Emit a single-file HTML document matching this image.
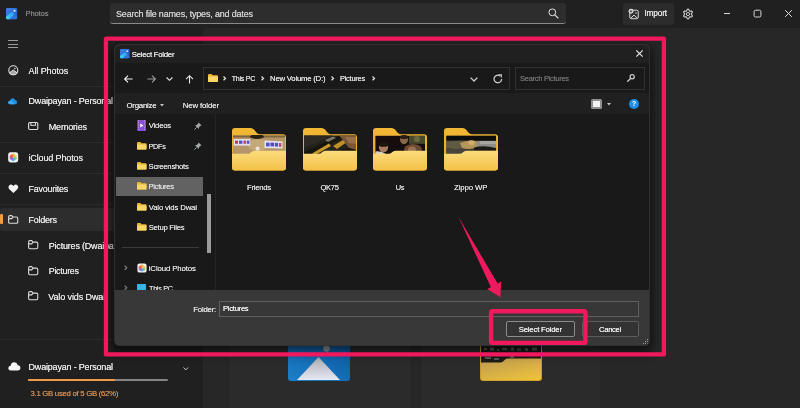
<!DOCTYPE html>
<html><head><meta charset="utf-8"><title>Photos</title>
<style>
*{box-sizing:border-box;margin:0;padding:0}
html,body{width:800px;height:408px;overflow:hidden;background:#202020}
body{font-family:"Liberation Sans",sans-serif;color:#e4e4e4;position:relative;font-size:9px}
.abs{position:absolute}
.t{position:absolute;white-space:nowrap;line-height:12px;height:12px;text-shadow:0 0 0.5px currentColor}
#w{position:absolute;left:0;top:0;width:800px;height:408px;will-change:transform}
#content{left:203px;top:28px;width:597px;height:380px;background:#272727;border-top-left-radius:4px}
.sep{position:absolute;left:0;width:203px;height:1px;background:#2c2c2c}
.nav{font-size:9.3px;color:#e6e6e6}
svg{position:absolute;overflow:visible}
</style></head><body>
<div id="w">
<!-- app chrome -->
<div class="abs" id="content"></div>
<div class="abs" style="left:230px;top:340px;width:180px;height:68px;background:#2b2b2b"></div>
<div class="abs" style="left:422px;top:340px;width:178px;height:68px;background:#2b2b2b"></div>

<!-- title bar -->
<svg style="left:5.8px;top:7.9px" width="11.2" height="11.2" viewBox="0 0 12 12"><defs><linearGradient id="ag" x1="0" y1="0" x2="1" y2="1"><stop offset="0" stop-color="#3f82e4"/><stop offset="1" stop-color="#2458c2"/></linearGradient>
 <linearGradient id="ag2" x1="0" y1="1" x2="1" y2="0"><stop offset="0" stop-color="#46d8fa"/><stop offset="1" stop-color="#2a9cec"/></linearGradient><clipPath id="ac"><rect x="0" y="0" width="12" height="12" rx="1.6"/></clipPath></defs>
 <rect x="0" y="0" width="12" height="12" rx="1.6" fill="url(#ag)"/>
 <g clip-path="url(#ac)"><path d="M-1 11.5 L5.6 4.9 Q6.4 4.1 7.2 4.9 L13 10.8 V13 H-1Z" fill="#2f74dc"/><path d="M-0.5 9.6 L5.7 4.6 Q6.4 4 7.1 4.6 L9 6.5 L2.6 13 H-0.5Z" fill="url(#ag2)"/></g>
 <rect x="8.1" y="1.9" width="2.1" height="2.1" rx="0.3" fill="#d6e6ff"/></svg>
<div class="t" style="left:25.50px;top:8px;font-size:7.7px;letter-spacing:-0.188px;color:#808080">Photos</div>
<div class="abs" style="left:110px;top:3px;width:456px;height:21px;background:#2d2d2d;border-radius:3px;border-bottom:1px solid #8a8a8a"></div>
<div class="t" style="left:116.00px;top:8px;font-size:9px;letter-spacing:-0.179px;color:#d0d0d0">Search file names, types, and dates</div>
<svg style="left:548px;top:8px" width="11" height="11" viewBox="0 0 11 11"><circle cx="4.3" cy="4.3" r="3.4" fill="none" stroke="#e0e0e0" stroke-width="1"/><path d="M6.8 6.8 L10 10" stroke="#e0e0e0" stroke-width="1.1" stroke-linecap="round"/></svg>
<div class="abs" style="left:622.5px;top:2.5px;width:51px;height:22px;background:#2c2c2c;border-radius:3px"></div>
<svg style="left:628.3px;top:7.8px" width="11.5" height="11.5" viewBox="0 0 13 13"><rect x="2" y="2.5" width="9.6" height="9.6" rx="1.8" fill="none" stroke="#e0e0e0" stroke-width="1.1"/><path d="M3 11.6 L6.8 8 L10.6 11.6" fill="none" stroke="#e0e0e0" stroke-width="1.1"/><circle cx="9" cy="5.6" r="0.85" fill="#e0e0e0"/><circle cx="3.4" cy="3.7" r="2.8" fill="#e0e0e0"/><path d="M3.4 2.2 V5.2 M1.9 3.7 H4.9" stroke="#2c2c2c" stroke-width="0.8"/></svg>
<div class="t" style="left:644.50px;top:7px;font-size:8.3px;letter-spacing:-0.203px;color:#e6e6e6">Import</div>
<svg style="left:681.8px;top:7.6px" width="12" height="12" viewBox="0 0 12 12"><path d="M6.00 1.10 L6.42 1.23 L6.78 1.57 L7.06 2.04 L7.27 2.52 L7.44 2.91 L7.65 3.14 L7.95 3.21 L8.38 3.17 L8.90 3.10 L9.45 3.11 L9.93 3.25 L10.24 3.55 L10.34 3.97 L10.23 4.46 L9.96 4.94 L9.64 5.36 L9.39 5.70 L9.30 6.00 L9.39 6.30 L9.64 6.64 L9.96 7.06 L10.23 7.54 L10.34 8.03 L10.24 8.45 L9.93 8.75 L9.45 8.89 L8.90 8.90 L8.38 8.83 L7.95 8.79 L7.65 8.86 L7.44 9.09 L7.27 9.48 L7.06 9.96 L6.78 10.43 L6.42 10.77 L6.00 10.90 L5.58 10.77 L5.22 10.43 L4.94 9.96 L4.73 9.48 L4.56 9.09 L4.35 8.86 L4.05 8.79 L3.62 8.83 L3.10 8.90 L2.55 8.89 L2.07 8.75 L1.76 8.45 L1.66 8.03 L1.77 7.54 L2.04 7.06 L2.36 6.64 L2.61 6.30 L2.70 6.00 L2.61 5.70 L2.36 5.36 L2.04 4.94 L1.77 4.46 L1.66 3.97 L1.76 3.55 L2.07 3.25 L2.55 3.11 L3.10 3.10 L3.62 3.17 L4.05 3.21 L4.35 3.14 L4.56 2.91 L4.73 2.52 L4.94 2.04 L5.22 1.57 L5.58 1.23Z" fill="none" stroke="#d6d6d6" stroke-width="1.05" stroke-linejoin="round"/><circle cx="6" cy="6" r="1.6" fill="none" stroke="#d6d6d6" stroke-width="0.95"/></svg>
<div class="abs" style="left:723.7px;top:13px;width:6.4px;height:1px;background:#d8d8d8"></div>
<svg style="left:753px;top:9px" width="9" height="9" viewBox="0 0 9 9"><rect x="1.1" y="1.2" width="6.8" height="6.8" rx="1.3" fill="none" stroke="#d8d8d8" stroke-width="1"/></svg>
<svg style="left:784.5px;top:10px" width="7" height="7" viewBox="0 0 7 7"><path d="M0.2 0.2 L6.8 6.8 M6.8 0.2 L0.2 6.8" stroke="#dcdcdc" stroke-width="1"/></svg>

<!-- sidebar -->
<div class="abs" style="left:8px;top:39.9px;width:9.5px;height:1.3px;background:#9c9c9c"></div>
<div class="abs" style="left:8px;top:43.5px;width:9.5px;height:1.3px;background:#9c9c9c"></div>
<div class="abs" style="left:8px;top:47.1px;width:9.5px;height:1.3px;background:#9c9c9c"></div>

<svg style="left:7.6px;top:64.8px" width="10.6" height="10.6" viewBox="0 0 12 12" preserveAspectRatio="none"><circle cx="6" cy="6" r="5.1" fill="none" stroke="#dedede" stroke-width="1.3"/><path d="M1.6 8.8 L6 5.6 L10.4 8.8 Q8.6 11.1 6 11.1 Q3.4 11.1 1.6 8.8Z" fill="#a8a8a8" stroke="#dedede" stroke-width="1.1" stroke-linejoin="round"/><circle cx="7.9" cy="3.9" r="0.9" fill="#dedede"/></svg>
<div class="t" style="left:28.50px;top:65px;font-size:9px;letter-spacing:-0.087px;color:#e6e6e6">All Photos</div>
<div class="sep" style="top:86px"></div>
<svg style="left:8.1px;top:97.8px" width="9.4" height="6.5" viewBox="0 0 13.3 10" preserveAspectRatio="none"><path d="M2.9 9.6 Q0.3 9.6 0.3 7 Q0.3 4.6 2.7 4.3 Q3.4 0.4 6.6 0.4 Q9.4 0.4 10.3 3.6 Q13 3.7 13 6.6 Q13 9.6 10.2 9.6Z" fill="#1f8fe6"/><path d="M2.9 9.6 Q0.3 9.6 0.3 7 Q0.3 4.6 2.7 4.3 Q5.5 4.2 7 6 Q8.5 8.4 10.2 9.6Z" fill="#3aa8f2"/></svg>
<div class="t" style="left:28.50px;top:95px;font-size:9px;letter-spacing:-0.187px;color:#e6e6e6">Dwaipayan - Personal</div>
<svg style="left:27.8px;top:122.4px" width="10.4" height="8.1" viewBox="0 0 12 10" preserveAspectRatio="none"><rect x="0.7" y="0.7" width="10.6" height="8.6" rx="1.3" fill="none" stroke="#dcdcdc" stroke-width="1.3"/><rect x="3.3" y="0.7" width="5.4" height="3.4" fill="none" stroke="#dcdcdc" stroke-width="1.2"/></svg>
<div class="t" style="left:48.75px;top:121px;font-size:9px;letter-spacing:-0.181px;color:#e6e6e6">Memories</div>
<div class="sep" style="top:142px"></div>
<svg style="left:7.7px;top:152.2px" width="10.4" height="10.6" viewBox="0 0 12 12" preserveAspectRatio="none"><rect x="0.2" y="0.2" width="11.6" height="11.6" rx="2.8" fill="#f2f2f2"/><circle cx="6" cy="3.7" r="2" fill="#f6a623" opacity=".9"/><circle cx="8.1" cy="4.9" r="2" fill="#f4d03f" opacity=".85"/><circle cx="8.1" cy="7.2" r="2" fill="#7ac74f" opacity=".85"/><circle cx="6" cy="8.4" r="2" fill="#3fa9f5" opacity=".85"/><circle cx="3.9" cy="7.2" r="2" fill="#9b59d0" opacity=".85"/><circle cx="3.9" cy="4.9" r="2" fill="#ef5350" opacity=".85"/></svg>
<div class="t" style="left:28.50px;top:152px;font-size:9px;letter-spacing:-0.129px;color:#e6e6e6">iCloud Photos</div>
<div class="sep" style="top:173px"></div>
<svg style="left:7.7px;top:184px" width="10.7" height="9.2" viewBox="0 0 12 10.4" preserveAspectRatio="none"><path d="M6 10.2 L1.2 5.6 Q-0.4 3.6 1.2 1.6 Q3.2 -0.2 5.2 1.5 L6 2.3 L6.8 1.5 Q8.8 -0.2 10.8 1.6 Q12.4 3.6 10.8 5.6Z" fill="#f4f4f4"/></svg>
<div class="t" style="left:28.50px;top:183px;font-size:9px;letter-spacing:-0.253px;color:#e6e6e6">Favourites</div>
<div class="sep" style="top:204px"></div>
<div class="abs" style="left:0;top:207.5px;width:203px;height:23px;background:#2d2d2d;border-radius:3px"></div>
<div class="abs" style="left:0;top:214.2px;width:2.6px;height:9.8px;background:#f29c46;border-radius:1px"></div>
<svg style="left:7.7px;top:215px" width="10.4" height="8.9" viewBox="0 0 12 10" preserveAspectRatio="none"><path d="M0.7 2.2 Q0.7 0.7 2.2 0.7 H4.3 L5.9 2.3 H9.8 Q11.3 2.3 11.3 3.8 V7.8 Q11.3 9.3 9.8 9.3 H2.2 Q0.7 9.3 0.7 7.8Z M0.7 4.1 H4.3 L5.9 2.3" fill="none" stroke="#dcdcdc" stroke-width="1.25" stroke-linejoin="round"/></svg>
<div class="t" style="left:28.50px;top:214px;font-size:9px;letter-spacing:-0.253px;color:#e6e6e6">Folders</div>
<svg style="left:27.7px;top:240.2px" width="10.4" height="9.4" viewBox="0 0 12 10" preserveAspectRatio="none"><path d="M0.7 2.2 Q0.7 0.7 2.2 0.7 H4.3 L5.9 2.3 H9.8 Q11.3 2.3 11.3 3.8 V7.8 Q11.3 9.3 9.8 9.3 H2.2 Q0.7 9.3 0.7 7.8Z M0.7 4.1 H4.3 L5.9 2.3" fill="none" stroke="#dcdcdc" stroke-width="1.25" stroke-linejoin="round"/></svg>
<div class="t" style="left:48.75px;top:240px;font-size:9px;letter-spacing:-0.194px;color:#e6e6e6">Pictures (Dwaipayan)</div>
<svg style="left:27.7px;top:265.5px" width="10.4" height="9.4" viewBox="0 0 12 10" preserveAspectRatio="none"><path d="M0.7 2.2 Q0.7 0.7 2.2 0.7 H4.3 L5.9 2.3 H9.8 Q11.3 2.3 11.3 3.8 V7.8 Q11.3 9.3 9.8 9.3 H2.2 Q0.7 9.3 0.7 7.8Z M0.7 4.1 H4.3 L5.9 2.3" fill="none" stroke="#dcdcdc" stroke-width="1.25" stroke-linejoin="round"/></svg>
<div class="t" style="left:48.75px;top:265px;font-size:8.92px;letter-spacing:-0.280px;color:#e6e6e6">Pictures</div>
<svg style="left:27.7px;top:290.9px" width="10.4" height="9.4" viewBox="0 0 12 10" preserveAspectRatio="none"><path d="M0.7 2.2 Q0.7 0.7 2.2 0.7 H4.3 L5.9 2.3 H9.8 Q11.3 2.3 11.3 3.8 V7.8 Q11.3 9.3 9.8 9.3 H2.2 Q0.7 9.3 0.7 7.8Z M0.7 4.1 H4.3 L5.9 2.3" fill="none" stroke="#dcdcdc" stroke-width="1.25" stroke-linejoin="round"/></svg>
<div class="t" style="left:48.20px;top:291px;font-size:9px;letter-spacing:-0.105px;color:#e6e6e6">Valo vids Dwai</div>
<div class="sep" style="top:339px"></div>
<svg style="left:7.6px;top:362.3px" width="12.7" height="8.8" viewBox="0 0 13.3 10" preserveAspectRatio="none"><path d="M2.9 9.6 Q0.3 9.6 0.3 7 Q0.3 4.6 2.7 4.3 Q3.4 0.4 6.6 0.4 Q9.4 0.4 10.3 3.6 Q13 3.7 13 6.6 Q13 9.6 10.2 9.6Z" fill="#f6f6f6"/></svg>
<div class="t" style="left:28.50px;top:361px;font-size:9px;letter-spacing:-0.187px;color:#e6e6e6">Dwaipayan - Personal</div>
<svg style="left:183.4px;top:366.6px" width="6" height="4" viewBox="0 0 6 4"><path d="M0.5 0.5 L2.8 2.9 L5.1 0.5" fill="none" stroke="#c8c8c8" stroke-width="1"/></svg>
<div class="abs" style="left:28px;top:378.7px;width:140px;height:2.7px;background:#858585;border-radius:1.3px"></div>
<div class="abs" style="left:28px;top:378.7px;width:87px;height:2.7px;background:#ee9a4c;border-radius:1.3px"></div>
<div class="t" style="left:30.50px;top:388px;font-size:7.78px;letter-spacing:-0.280px;color:#cc8a50">3.1 GB used of 5 GB (62%)</div>

<!-- DIALOG START -->
<!-- background items peeking under pink frame -->
<svg style="left:288px;top:345px" width="62" height="36" viewBox="0 0 62 36">
 <defs><linearGradient id="bg1" x1="0" y1="1" x2="1" y2="0"><stop offset="0" stop-color="#1c80c8"/><stop offset="1" stop-color="#0c58a0"/></linearGradient>
 <linearGradient id="bg2" x1="0" y1="0" x2="0" y2="1"><stop offset="0" stop-color="#a9a9b0"/><stop offset="1" stop-color="#e6e8f4"/></linearGradient></defs>
 <path d="M0 0 H62 V33 Q62 36 59 36 H3 Q0 36 0 33Z" fill="url(#bg1)"/>
 <path d="M9 35 L30.5 12 L52 35Z" fill="url(#bg2)"/>
 <circle cx="38.5" cy="3.5" r="3.2" fill="#9a9ea4"/>
</svg>
<svg style="left:480px;top:345px" width="62" height="36" viewBox="0 0 62 36">
 <defs><linearGradient id="bg3" x1="0.2" y1="0" x2="0.8" y2="1"><stop offset="0" stop-color="#c09c50"/><stop offset="1" stop-color="#ecc23a"/></linearGradient></defs>
 <path d="M0 0 H62 V33 Q62 36 59 36 H3 Q0 36 0 33Z" fill="#c99a28"/>
 <rect x="1" y="0" width="60" height="18" fill="#1c1b17"/>
 <path d="M4 3 h3 v2 h-3z M10 2.5 h4 v3 h-4z M17 4 h2 v2 h-2z M22 3 h5 v2 h-5z M31 2.5 h3 v3 h-3z M37 3.5 h4 v2 h-4z M45 3 h3 v3 h-3z M52 2.5 h5 v3 h-5z M5 12 h6 v2 h-6z M14 13 h5 v2 h-5z M30 11 h4 v2 h-4z" fill="#5c6a5e" opacity=".8"/>
 <path d="M1 17.6 H20 Q22 17.6 23.4 16.2 L24.6 15 Q26 13.6 28 13.6 H61 V32.5 Q61 35.2 58 35.2 H4 Q1 35.2 1 32.5Z" fill="url(#bg3)"/>
</svg>


<!-- dialog -->
<div class="abs" id="dlg" style="left:114px;top:44px;width:536px;height:302px;background:#202020;border-radius:6px;box-shadow:0 0 0 1px #363636 inset,0 4px 10px 3px rgba(0,0,0,.55);overflow:hidden">
 <!-- title -->
 <svg style="left:5.6px;top:4.7px" width="9.5" height="9.2" viewBox="0 0 12 12" preserveAspectRatio="none"><defs><linearGradient id="dg" x1="0" y1="0" x2="1" y2="1"><stop offset="0" stop-color="#3f82e4"/><stop offset="1" stop-color="#2458c2"/></linearGradient>
 <linearGradient id="dg2" x1="0" y1="1" x2="1" y2="0"><stop offset="0" stop-color="#46d8fa"/><stop offset="1" stop-color="#2a9cec"/></linearGradient><clipPath id="dc"><rect x="0" y="0" width="12" height="12" rx="1.6"/></clipPath></defs>
 <rect x="0" y="0" width="12" height="12" rx="1.6" fill="url(#dg)"/>
 <g clip-path="url(#dc)"><path d="M-1 11.5 L5.6 4.9 Q6.4 4.1 7.2 4.9 L13 10.8 V13 H-1Z" fill="#2f74dc"/><path d="M-0.5 9.6 L5.7 4.6 Q6.4 4 7.1 4.6 L9 6.5 L2.6 13 H-0.5Z" fill="url(#dg2)"/></g>
 <rect x="8.1" y="1.9" width="2.1" height="2.1" rx="0.3" fill="#d6e6ff"/></svg>
 <div class="t" style="left:17.75px;top:5px;font-size:7.8px;letter-spacing:-0.266px;color:#e8e8e8">Select Folder</div>
 <svg style="left:521.5px;top:6.3px" width="7" height="7" viewBox="0 0 7 7"><path d="M0.3 0.3 L6.7 6.7 M6.7 0.3 L0.3 6.7" stroke="#e4e4e4" stroke-width="1.2"/></svg>
 <!-- nav row -->
 <div class="abs" style="left:0;top:19px;width:536px;height:30px;background:#191919"></div>
 <svg style="left:10px;top:31px" width="9" height="8" viewBox="0 0 9 8"><path d="M8.6 4 H0.8 M4 0.6 L0.6 4 L4 7.4" fill="none" stroke="#f0f0f0" stroke-width="1.1"/></svg>
 <svg style="left:33px;top:31px" width="9" height="8" viewBox="0 0 9 8"><path d="M0.4 4 H8.2 M5 0.6 L8.4 4 L5 7.4" fill="none" stroke="#9c9c9c" stroke-width="1.1"/></svg>
 <svg style="left:52px;top:33px" width="7" height="4" viewBox="0 0 7 4"><path d="M0.6 0.5 L3.5 3.3 L6.4 0.5" fill="none" stroke="#e8e8e8" stroke-width="1.1"/></svg>
 <svg style="left:71px;top:31px" width="9" height="9" viewBox="0 0 9 9"><path d="M4.5 8.6 V0.8 M1 4.2 L4.5 0.7 L8 4.2" fill="none" stroke="#e8e8e8" stroke-width="1.1"/></svg>
 <div class="abs" style="left:89px;top:23px;width:307px;height:23px;border:1px solid #313131;background:#191919"></div>
 <svg style="left:94px;top:30px" width="10" height="8" viewBox="0 0 10 8"><path d="M0 1 Q0 0 1 0 H3.6 L4.8 1.2 H9 Q10 1.2 10 2.2 V7 Q10 8 9 8 H1 Q0 8 0 7Z" fill="#e8b735"/><path d="M0 2.6 H10 V7 Q10 8 9 8 H1 Q0 8 0 7Z" fill="#f7d768"/></svg>
 <svg style="left:108.7px;top:32.3px" width="3" height="5" viewBox="0 0 3 5"><path d="M0.5 0.5 L2.5 2.4 L0.5 4.3" fill="none" stroke="#e0e0e0" stroke-width="1.3"/></svg><div class="t" style="left:117.75px;top:29px;font-size:7.08px;letter-spacing:-0.280px;color:#e0e0e0">This PC</div><svg style="left:147.45px;top:32.3px" width="3" height="5" viewBox="0 0 3 5"><path d="M0.5 0.5 L2.5 2.4 L0.5 4.3" fill="none" stroke="#e0e0e0" stroke-width="1.3"/></svg><div class="t" style="left:156.00px;top:29px;font-size:7.8px;letter-spacing:-0.246px;color:#e0e0e0">New Volume (D:)</div><svg style="left:217.45px;top:32.3px" width="3" height="5" viewBox="0 0 3 5"><path d="M0.5 0.5 L2.5 2.4 L0.5 4.3" fill="none" stroke="#e0e0e0" stroke-width="1.3"/></svg><div class="t" style="left:226.00px;top:29px;font-size:7.53px;letter-spacing:-0.280px;color:#e0e0e0">Pictures</div><svg style="left:257.7px;top:32.3px" width="3" height="5" viewBox="0 0 3 5"><path d="M0.5 0.5 L2.5 2.4 L0.5 4.3" fill="none" stroke="#e0e0e0" stroke-width="1.3"/></svg>
 <svg style="left:356.4px;top:32.6px" width="8" height="5" viewBox="0 0 8 5"><path d="M0.6 0.6 L4 4 L7.4 0.6" fill="none" stroke="#cdcdcd" stroke-width="1.3"/></svg>
 <svg style="left:379px;top:30.2px" width="9.6" height="9.6" viewBox="0 0 9.6 9.6"><path d="M8.6 4.9 A3.8 3.8 0 1 1 7 1.9" fill="none" stroke="#d0d0d0" stroke-width="1.25"/><path d="M5.6 0.9 L8.3 0.9 L8.3 3.6" fill="none" stroke="#d0d0d0" stroke-width="1.2"/></svg>
 <div class="abs" style="left:401px;top:23px;width:130px;height:23px;border:1px solid #313131;background:#191919"></div>
 <div class="t" style="left:406.00px;top:29px;font-size:7.53px;letter-spacing:-0.280px;color:#6e6e6e">Search Pictures</div>
 <svg style="left:513px;top:30px" width="8" height="8" viewBox="0 0 8 8"><circle cx="5.2" cy="2.8" r="2.1" fill="none" stroke="#cacaca" stroke-width="1.25"/><path d="M3.6 4.4 L0.7 7.3" stroke="#cacaca" stroke-width="1.35" stroke-linecap="round"/></svg>
 <!-- toolbar row -->
 <div class="t" style="left:12.50px;top:56px;font-size:7.8px;letter-spacing:-0.234px;color:#e0e0e0">Organize</div>
 <svg style="left:45.5px;top:59.5px" width="4" height="3" viewBox="0 0 4 3"><path d="M0 0 H4 L2 2.4Z" fill="#c8c8c8"/></svg>
 <div class="t" style="left:68.75px;top:56px;font-size:7.8px;letter-spacing:-0.115px;color:#e0e0e0">New folder</div>
 <div class="abs" style="left:477px;top:55px;width:11px;height:10px;background:#8e8e8e;border-radius:1.5px"></div>
 <div class="abs" style="left:479px;top:57px;width:7px;height:6px;background:#f2f2f2"></div>
 <svg style="left:493.4px;top:59px" width="4" height="3" viewBox="0 0 4 3"><path d="M0 0 H4 L2 2.4Z" fill="#c8c8c8"/></svg>
 <div class="abs" style="left:515px;top:55px;width:10px;height:10px;border-radius:50%;background:#1e8fe8;color:#fff;font-size:7.5px;font-weight:bold;text-align:center;line-height:10px">?</div>
 <!-- content -->
 <div class="abs" style="left:0;top:69.6px;width:536px;height:177px;background:#191919"></div>
 <div class="abs" style="left:101px;top:70px;width:1px;height:176px;background:#242424"></div>
 <!-- nav tree -->
 <div class="abs" style="left:2px;top:133px;width:87px;height:19px;background:#626262"></div>
 <svg style="left:22.7px;top:75.8px" width="9.2" height="11" viewBox="0 0 10 11" preserveAspectRatio="none"><rect x="0.3" y="0" width="9.4" height="11" rx="1" fill="#8a4fd8"/><path d="M1.6 0 V11 M8.4 0 V11" stroke="#c9a8f5" stroke-width="0.8" stroke-dasharray="1.2 1"/><path d="M3.6 3.4 L7 5.5 L3.6 7.6Z" fill="#fff"/></svg>
 <div class="t" style="left:34.75px;top:76px;font-size:7.8px;letter-spacing:-0.241px;color:#dcdcdc">Videos</div>
 <svg style="left:80px;top:77.6px" width="8" height="8" viewBox="0 0 8 8"><path d="M4.6 0.4 L7.6 3.4 L6.4 3.8 L5 5.2 L4.8 7 L1 3.2 L2.8 3 L4.2 1.6Z" fill="#a4aaaa"/><path d="M2.6 5.4 L0.4 7.6" stroke="#a4aaaa" stroke-width="1"/></svg>
 <svg style="left:22.6px;top:98.1px" width="9.5" height="7.6" viewBox="0 0 10 8"><path d="M0 1 Q0 0 1 0 H3.6 L4.8 1.2 H9 Q10 1.2 10 2.2 V7 Q10 8 9 8 H1 Q0 8 0 7Z" fill="#e8b735"/><path d="M0 2.6 H10 V7 Q10 8 9 8 H1 Q0 8 0 7Z" fill="#f7d768"/></svg>
 <div class="t" style="left:34.50px;top:97px;font-size:7.24px;letter-spacing:-0.280px;color:#dcdcdc">PDFs</div>
 <svg style="left:80px;top:97.6px" width="8" height="8" viewBox="0 0 8 8"><path d="M4.6 0.4 L7.6 3.4 L6.4 3.8 L5 5.2 L4.8 7 L1 3.2 L2.8 3 L4.2 1.6Z" fill="#a4aaaa"/><path d="M2.6 5.4 L0.4 7.6" stroke="#a4aaaa" stroke-width="1"/></svg>
 <svg style="left:22.6px;top:118.1px" width="9.5" height="7.6" viewBox="0 0 10 8"><path d="M0 1 Q0 0 1 0 H3.6 L4.8 1.2 H9 Q10 1.2 10 2.2 V7 Q10 8 9 8 H1 Q0 8 0 7Z" fill="#e8b735"/><path d="M0 2.6 H10 V7 Q10 8 9 8 H1 Q0 8 0 7Z" fill="#f7d768"/></svg>
 <div class="t" style="left:34.50px;top:117px;font-size:7.75px;letter-spacing:-0.280px;color:#dcdcdc">Screenshots</div>
 <svg style="left:22.6px;top:138.1px" width="9.5" height="7.6" viewBox="0 0 10 8"><path d="M0 1 Q0 0 1 0 H3.6 L4.8 1.2 H9 Q10 1.2 10 2.2 V7 Q10 8 9 8 H1 Q0 8 0 7Z" fill="#e8b735"/><path d="M0 2.6 H10 V7 Q10 8 9 8 H1 Q0 8 0 7Z" fill="#f7d768"/></svg>
 <div class="t" style="left:34.50px;top:137px;font-size:7.63px;letter-spacing:-0.280px;color:#dcdcdc">Pictures</div>
 <svg style="left:22.6px;top:159.1px" width="9.5" height="7.6" viewBox="0 0 10 8"><path d="M0 1 Q0 0 1 0 H3.6 L4.8 1.2 H9 Q10 1.2 10 2.2 V7 Q10 8 9 8 H1 Q0 8 0 7Z" fill="#e8b735"/><path d="M0 2.6 H10 V7 Q10 8 9 8 H1 Q0 8 0 7Z" fill="#f7d768"/></svg>
 <div class="t" style="left:34.75px;top:158px;font-size:7.8px;letter-spacing:-0.178px;color:#dcdcdc">Valo vids Dwai</div>
 <svg style="left:22.6px;top:179.1px" width="9.5" height="7.6" viewBox="0 0 10 8"><path d="M0 1 Q0 0 1 0 H3.6 L4.8 1.2 H9 Q10 1.2 10 2.2 V7 Q10 8 9 8 H1 Q0 8 0 7Z" fill="#e8b735"/><path d="M0 2.6 H10 V7 Q10 8 9 8 H1 Q0 8 0 7Z" fill="#f7d768"/></svg>
 <div class="t" style="left:34.75px;top:178px;font-size:7.71px;letter-spacing:-0.280px;color:#dcdcdc">Setup Files</div>
 <svg style="left:22.5px;top:219px" width="10" height="10" viewBox="0 0 12 12"><rect x="0.5" y="0.5" width="11" height="11" rx="2.6" fill="#f4f4f4"/><circle cx="6" cy="3.6" r="1.9" fill="#f6a623" opacity=".9"/><circle cx="8.2" cy="5" r="1.9" fill="#f4d03f" opacity=".85"/><circle cx="8" cy="7.4" r="1.9" fill="#7ac74f" opacity=".85"/><circle cx="6" cy="8.4" r="1.9" fill="#3fa9f5" opacity=".85"/><circle cx="3.9" cy="7.4" r="1.9" fill="#9b59d0" opacity=".85"/><circle cx="3.8" cy="5" r="1.9" fill="#ef5350" opacity=".85"/></svg>
 <svg style="left:10px;top:221px" width="3.6" height="5.6" viewBox="0 0 4 6"><path d="M0.7 0.6 L3.1 3 L0.7 5.4" fill="none" stroke="#868686" stroke-width="1.25"/></svg>
 <div class="t" style="left:34.75px;top:219px;font-size:7.8px;letter-spacing:-0.108px;color:#dcdcdc">iCloud Photos</div>
 <svg style="left:22.5px;top:239.5px" width="9" height="9" viewBox="0 0 10 9" preserveAspectRatio="none"><rect x="0" y="0" width="10" height="6.6" rx="0.6" fill="#3ab2e6"/><rect x="3" y="7.6" width="4" height="1" fill="#9ad8f6"/></svg>
 <svg style="left:10px;top:241px" width="3.6" height="5.6" viewBox="0 0 4 6"><path d="M0.7 0.6 L3.1 3 L0.7 5.4" fill="none" stroke="#868686" stroke-width="1.25"/></svg>
 <div class="t" style="left:35.00px;top:239px;font-size:7.22px;letter-spacing:-0.280px;color:#dcdcdc">This PC</div>
 <div class="abs" style="left:8px;top:203px;width:77px;height:1px;background:#3a3a3a"></div>
 <div class="abs" style="left:93px;top:150px;width:4px;height:59px;background:#9c9c9c"></div>
 <!-- folders -->
 <svg style="left:0;top:0" width="0" height="0"><defs><filter id="tb" x="-5%" y="-10%" width="110%" height="120%"><feGaussianBlur stdDeviation="0.45"/></filter><linearGradient id="ff" x1="0" y1="0" x2="0" y2="1"><stop offset="0" stop-color="#fbdc7c"/><stop offset="1" stop-color="#f3c148"/></linearGradient><linearGradient id="fb" x1="0" y1="0" x2="0" y2="1"><stop offset="0" stop-color="#f2b834"/><stop offset="1" stop-color="#e5a326"/></linearGradient></defs></svg>
 <svg style="left:118.3px;top:84.1px" width="54" height="43" viewBox="0 0 54 43">
  <clipPath id="tc0"><path d="M0.8 7 H53.2 V27 H0.8Z"/></clipPath>
  <path d="M0 3 Q0 0 3 0 H18.5 Q20.6 0 22 1.6 L24.4 4.6 Q25.8 6.2 28 6.2 H51 Q54 6.2 54 9.2 V39.6 Q54 42.6 51 42.6 H3 Q0 42.6 0 39.6Z" fill="url(#fb)"/>
  <g clip-path="url(#tc0)"><g filter="url(#tb)"><rect x="1" y="7.5" width="52" height="19" fill="#b4966a"/>
  <rect x="1" y="7.5" width="52" height="2" fill="#7d6540"/>
  <ellipse cx="25" cy="8.6" rx="7" ry="2.4" fill="#2a2015"/>
  <ellipse cx="26" cy="17" rx="10" ry="6" fill="#c4a878"/>
  <rect x="1.6" y="11" width="16.6" height="6.6" fill="#e4e0ea"/>
  <rect x="3" y="12.6" width="3" height="3.2" fill="#c0405a"/><rect x="7" y="12.6" width="3.4" height="3.2" fill="#4a58c8"/><rect x="11.4" y="12.6" width="2.6" height="3.2" fill="#c04a6a"/><rect x="14.8" y="12.6" width="2.6" height="3.2" fill="#4a58c8"/>
  <path d="M32.5 12.6 L50.6 13.4 V20.6 L32.5 20Z" fill="#e6e4f0"/>
  <rect x="34" y="14.6" width="3.6" height="3.8" fill="#4a56c8"/><rect x="38.4" y="14.6" width="3.6" height="3.8" fill="#5a4ac0"/><rect x="42.8" y="14.8" width="3.2" height="3.8" fill="#4a56c8"/><rect x="46.8" y="15" width="2.6" height="3.8" fill="#b84a70"/>
  <circle cx="25.6" cy="20.6" r="2.1" fill="#ece6d8"/></g></g>
  <path d="M0 25.8 H15.5 Q17.6 25.8 19 24.3 Q20.4 22.8 22.5 22.8 H54 V39.6 Q54 42.6 51 42.6 H3 Q0 42.6 0 39.6Z" fill="url(#ff)"/>
 </svg>
 <div class="t" style="left:133.00px;top:138px;font-size:7.78px;letter-spacing:-0.280px;color:#dcdcdc">Friends</div>
 <svg style="left:188.8px;top:84.1px" width="54" height="43" viewBox="0 0 54 43">
  <clipPath id="tc1"><path d="M0.8 7 H53.2 V27 H0.8Z"/></clipPath>
  <path d="M0 3 Q0 0 3 0 H18.5 Q20.6 0 22 1.6 L24.4 4.6 Q25.8 6.2 28 6.2 H51 Q54 6.2 54 9.2 V39.6 Q54 42.6 51 42.6 H3 Q0 42.6 0 39.6Z" fill="url(#fb)"/>
  <g clip-path="url(#tc1)"><g filter="url(#tb)"><rect x="1" y="7.5" width="52" height="19" fill="#24211c"/>
  <path d="M1 7.5 H30 L1 20Z" fill="#2e2a22"/>
  <path d="M1 24 L36 8 L42 8 L8 26.5 H1Z" fill="#15140f"/>
  <path d="M9 25.5 L26 15.5 L28 18 L13 26.5Z" fill="#c8982a"/>
  <path d="M22 12 L30 8.5 L33 10 L25 14Z" fill="#7a7568"/>
  <path d="M30 18 L40 12 L44 14 L34 21Z" fill="#c09028"/>
  <path d="M36 7.5 H53 V22 L46 20 L40 12Z" fill="#7a5634"/>
  <path d="M42 9 H53 V16 L46 15Z" fill="#96704a"/>
  <path d="M28 24 L46 20 L53 22 V26.5 H28Z" fill="#15130f"/></g></g>
  <path d="M0 25.8 H15.5 Q17.6 25.8 19 24.3 Q20.4 22.8 22.5 22.8 H54 V39.6 Q54 42.6 51 42.6 H3 Q0 42.6 0 39.6Z" fill="url(#ff)"/>
 </svg>
 <div class="t" style="left:206.50px;top:138px;font-size:7.56px;letter-spacing:-0.280px;color:#dcdcdc">QK75</div>
 <svg style="left:259.2px;top:84.1px" width="54" height="43" viewBox="0 0 54 43">
  <clipPath id="tc2"><path d="M0.8 7 H53.2 V27 H0.8Z"/></clipPath>
  <path d="M0 3 Q0 0 3 0 H18.5 Q20.6 0 22 1.6 L24.4 4.6 Q25.8 6.2 28 6.2 H51 Q54 6.2 54 9.2 V39.6 Q54 42.6 51 42.6 H3 Q0 42.6 0 39.6Z" fill="url(#fb)"/>
  <g clip-path="url(#tc2)"><g filter="url(#tb)"><rect x="1" y="7.5" width="52" height="19" fill="#e9b030"/>
  <rect x="2.4" y="7.8" width="49.6" height="19" fill="#140f0c"/>
  <rect x="36" y="7.8" width="16" height="8" fill="#4c4a2c"/>
  <circle cx="44" cy="11" r="3" fill="#6a6a40"/>
  <ellipse cx="31" cy="11.6" rx="4" ry="4.6" fill="#8c684c"/>
  <ellipse cx="31" cy="9" rx="4.2" ry="2" fill="#2a1a12"/>
  <ellipse cx="40" cy="21.5" rx="9" ry="5.6" fill="#6c4a30"/>
  <ellipse cx="39" cy="22" rx="4" ry="3.4" fill="#9a7252"/>
  <ellipse cx="10.5" cy="19.5" rx="4.6" ry="4.8" fill="#a67c62"/>
  <ellipse cx="10.5" cy="16.4" rx="5" ry="2.4" fill="#1c1410"/>
  <path d="M2.4 23.5 Q8 22.5 14 26.8 H2.4Z" fill="#d8cec4"/></g></g>
  <path d="M0 25.8 H15.5 Q17.6 25.8 19 24.3 Q20.4 22.8 22.5 22.8 H54 V39.6 Q54 42.6 51 42.6 H3 Q0 42.6 0 39.6Z" fill="url(#ff)"/>
 </svg>
 <div class="t" style="left:281.75px;top:138px;font-size:7.39px;letter-spacing:-0.280px;color:#dcdcdc">Us</div>
 <svg style="left:330.1px;top:84.1px" width="54" height="43" viewBox="0 0 54 43">
  <clipPath id="tc3"><path d="M0.8 7 H53.2 V27 H0.8Z"/></clipPath>
  <path d="M0 3 Q0 0 3 0 H18.5 Q20.6 0 22 1.6 L24.4 4.6 Q25.8 6.2 28 6.2 H51 Q54 6.2 54 9.2 V39.6 Q54 42.6 51 42.6 H3 Q0 42.6 0 39.6Z" fill="url(#fb)"/>
  <g clip-path="url(#tc3)"><g filter="url(#tb)"><rect x="1" y="7.5" width="52" height="19" fill="#e9b030"/>
  <rect x="2.4" y="7.8" width="49.6" height="19" fill="#3c3a2c"/>
  <rect x="2.4" y="7.8" width="49.6" height="4.6" fill="#0b0b0a"/>
  <path d="M2.4 13.4 Q14 12.4 26 13 L22 20 Q10 22 2.4 20Z" fill="#5e5a42"/>
  <path d="M2.4 20 Q12 22 22 20 L24 26.8 H2.4Z" fill="#46443a"/>
  <path d="M16 15 Q24 11.5 34 13.5 L33 19.5 Q26 22 18 20Z" fill="#b69558"/>
  <path d="M24 13 Q28 11.5 31 13.5 L29 17 L25 16.5Z" fill="#d0b070"/>
  <path d="M33 13 H52 V21 H32Z" fill="#8e8e8a"/>
  <path d="M36 13 H52 V16 H36Z" fill="#a8a8a2"/>
  <path d="M30 19.5 Q40 17 52 20 V22.5 H30Z" fill="#1e1e18"/></g></g>
  <path d="M0 25.8 H15.5 Q17.6 25.8 19 24.3 Q20.4 22.8 22.5 22.8 H54 V39.6 Q54 42.6 51 42.6 H3 Q0 42.6 0 39.6Z" fill="url(#ff)"/>
 </svg>
 <div class="t" style="left:340.00px;top:138px;font-size:7.8px;letter-spacing:-0.105px;color:#dcdcdc">Zippo WP</div>
 <!-- bottom -->
 <div class="abs" style="left:0;top:246px;width:536px;height:56px;background:#383838"></div>
 <div class="t" style="left:79.25px;top:260px;font-size:7.8px;letter-spacing:-0.214px;color:#e0e0e0">Folder:</div>
 <div class="abs" style="left:105px;top:257px;width:420px;height:16px;border:1px solid #606060;background:#373737"></div>
 <div class="t" style="left:109.00px;top:259px;font-size:7.67px;letter-spacing:-0.280px;color:#f0f0f0">Pictures</div>
 <div class="abs" style="left:392px;top:277px;width:69px;height:16px;border:1px solid #8c8c8c;border-radius:2px;background:#333"></div><div class="t" style="left:404.75px;top:280px;font-size:7.8px;letter-spacing:-0.224px;color:#f0f0f0">Select Folder</div>
 <div class="abs" style="left:468px;top:277px;width:57px;height:16px;border:1px solid #5c5c5c;border-radius:2px;background:#333"></div><div class="t" style="left:485.00px;top:280px;font-size:7.6px;letter-spacing:-0.280px;color:#f0f0f0">Cancel</div>
 <svg style="left:529px;top:295px" width="5" height="5" viewBox="0 0 5 5"><path d="M4 0H5V1H4ZM2 2H3V3H2ZM4 2H5V3H4ZM0 4H1V5H0ZM2 4H3V5H2ZM4 4H5V5H4Z" fill="#9a9a9a"/></svg>
 <div class="abs" style="left:0;top:0;width:536px;height:302px;border:1px solid #303030;border-radius:6px"></div>
</div>

<!-- pink frame -->
<svg style="left:0;top:0" width="800" height="408" viewBox="0 0 800 408"><rect x="105.95" y="38.6" width="557.95" height="315.8" rx="0.4" fill="none" stroke="#f0195e" stroke-width="4.3"/></svg>
<!-- annotations -->
<svg style="left:0;top:0" width="800" height="408" viewBox="0 0 800 408"><rect x="491.1" y="311.2" width="94.3" height="31.7" rx="1.5" fill="none" stroke="#f0195e" stroke-width="4.4"/></svg>
<svg style="left:0;top:0" width="800" height="408" viewBox="0 0 800 408"><path d="M458.4 216.8 L497.6 283.6 L501.2 281.6 L500.4 297.3 L487.3 288.9 L490.9 287.3 Z" fill="#f0195e"/></svg>

<!-- DIALOG END -->
</div>
</body></html>
